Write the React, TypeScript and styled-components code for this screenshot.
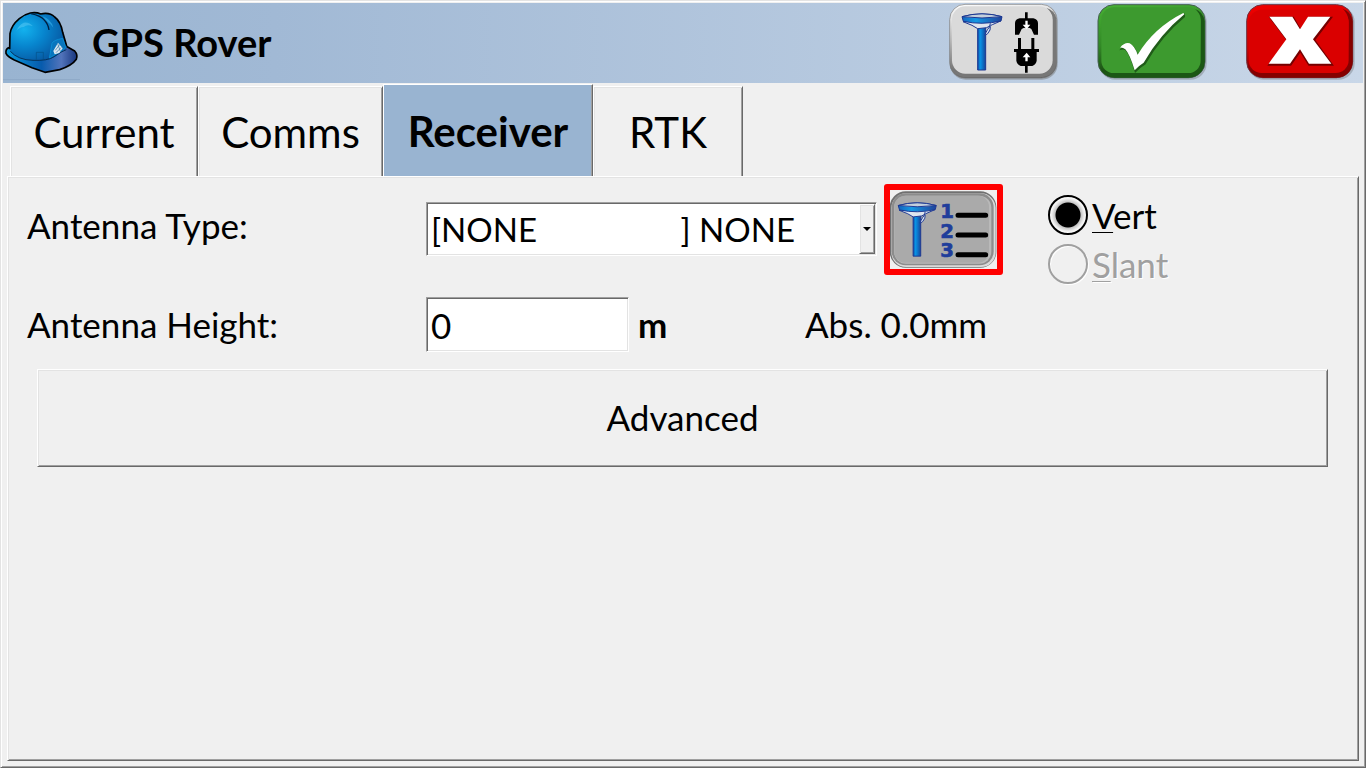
import React, { useState } from "react";
import styled, { createGlobalStyle, css } from "styled-components";

const GlobalStyle = createGlobalStyle`
  * { box-sizing: border-box; }
  body { margin: 0; background: #f0f0f0; }
  body, button, input, select { font-family: Lato, "Open Sans", sans-serif; color: #000; }
`;

const raised = css`
  border: 1px solid;
  border-color: #fff #696969 #696969 #fff;
  box-shadow: inset 1px 1px #e3e3e3, inset -1px -1px #a0a0a0;
`;

const sunken = css`
  border: 1px solid;
  border-color: #a0a0a0 #fff #fff #a0a0a0;
  box-shadow: inset 1px 1px #696969, inset -1px -1px #e3e3e3;
`;

const Window = styled.div`
  display: flex;
  flex-direction: column;
  min-height: 100vh;
  padding: 2px 2px 6px;
  border: 1px solid;
  border-color: #e3e3e3 #696969 #696969 #e3e3e3;
  box-shadow: inset 1px 1px #fff, inset -1px -1px #a0a0a0;
`;

const Header = styled.header`
  display: flex;
  align-items: flex-start;
  height: 80px;
  padding-right: 7px;
  background: linear-gradient(90deg, #99b4d1 0%, #a1b9d5 20%, #c9d7e8 100%);
`;

const Title = styled.h1`
  flex: 1;
  margin: 0 0 0 11px;
  font-size: 38px;
  line-height: 78px;
  font-weight: 700;
`;

const Actions = styled.div`
  display: flex;
  gap: 39px;
`;

const IconButton = styled.button`
  display: block;
  padding: 0;
  border: 0;
  background: none;
  svg { display: block; }
`;

const Helmet = styled.svg`
  margin-top: 6px;
  flex: none;
`;

const Tabs = styled.div`
  display: flex;
  align-items: flex-end;
  height: 93px;
  padding-left: 7px;
`;

const Tab = styled.button<{ $active: boolean; $width: number }>`
  width: ${(p) => p.$width}px;
  height: ${(p) => (p.$active ? 92 : 90)}px;
  padding: 0;
  border: 1px solid;
  border-color: #fff #696969 transparent #fff;
  border-bottom: 0;
  background: ${(p) => (p.$active ? "#99b4d1" : "#f0f0f0")};
  box-shadow: ${(p) => (p.$active ? "inset -1px 0 #a0a0a0" : "inset 1px 1px #e3e3e3, inset -1px 0 #a0a0a0")};
  font-size: 42px;
  line-height: 48px;
  font-weight: ${(p) => (p.$active ? 700 : 400)};
`;

const Panel = styled.main`
  ${raised}
  flex: 1;
  margin: 0 4px 0 4px;
  padding: 7px 30px 24px 19px;
`;

const Row = styled.div<{ $height: number }>`
  display: flex;
  align-items: flex-start;
  min-height: ${(p) => p.$height}px;
  font-size: 35px;
  line-height: 46px;
`;

const Label = styled.label<{ $top: number }>`
  width: 399px;
  flex: none;
  padding-top: ${(p) => p.$top}px;
`;

const SelectBox = styled.div`
  position: relative;
  width: 451px;
  margin: 18px 7px 0 0;
`;

const Select = styled.select`
  ${sunken}
  display: block;
  width: 100%;
  height: 54px;
  padding: 0 20px 0 4px;
  appearance: none;
  border-radius: 0;
  background: #fff;
  font-size: 33px;
`;

const Arrow = styled.span`
  ${raised}
  position: absolute;
  top: 2px;
  right: 2px;
  bottom: 2px;
  display: grid;
  place-items: center;
  width: 16px;
  background: #f0f0f0;
  pointer-events: none;
`;

const ListButton = styled(IconButton)`
  border: 6px solid #f00;
  border-radius: 3px;
  background: #f0f0f0;
`;

const Radios = styled.div`
  display: flex;
  flex-direction: column;
  gap: 9px;
  margin: 11px 0 0 45px;
`;

const RadioLabel = styled.label<{ $off?: boolean }>`
  display: flex;
  align-items: center;
  gap: 4px;
  height: 40px;
  line-height: 40px;
  color: ${(p) => (p.$off ? "#a0a0a0" : "#000")};
  text-shadow: ${(p) => (p.$off ? "1px 1px #fff" : "none")};
  u { text-decoration-thickness: 1px; text-underline-offset: 3px; }
`;

const Radio = styled.input`
  appearance: none;
  width: 40px;
  height: 40px;
  margin: 0;
  border: 2px solid #000;
  border-radius: 50%;
  background: #fff;
  &:checked {
    background: radial-gradient(circle, #000 12px, #c4c4c4 13px, #ececec 16px, #fff 18px);
  }
  &:disabled {
    border-color: #a0a0a0;
    background: #f0f0f0;
    box-shadow: inset 1px 1px #fff, 1px 1px #fff;
  }
`;

const HeightInput = styled.input`
  ${sunken}
  width: 203px;
  height: 55px;
  padding: 0 4px;
  background: #fff;
  font-size: 35px;
`;

const Unit = styled.strong`
  width: 167px;
  margin-left: 9px;
  padding-top: 4px;
`;

const Absolute = styled.output`
  padding-top: 4px;
`;

const Advanced = styled.button`
  ${raised}
  display: block;
  width: calc(100% - 10px);
  height: 98px;
  margin-left: 10px;
  padding: 0 0 2px;
  background: #f0f0f0;
  font-size: 35px;
`;

function Antenna() {
  return (
    <g stroke="#1c3791" strokeWidth="3" strokeLinejoin="round">
      <path d="M113 82h24v128h-24z" fill="url(#pole)" />
      <path d="M69 65L96 76L113 86L140 83L157 74L182 63Z" fill="#dfe5ee" />
      <path d="M66 50Q126 33 186 50L183 63Q126 76 70 64Z" fill="url(#disc)" />
      <path d="M66 50Q126 33 186 50Q126 58 66 50Z" fill="#c3cfdc" />
      <path d="M151 70Q150 83 143 88L137 99L135 106L143 101L150 90L151 79" fill="#dce5f1" strokeWidth="3" />
    </g>
  );
}

function Defs() {
  return (
    <defs>
      <linearGradient id="pole">
        <stop offset="0" stopColor="#14459f" />
        <stop offset=".3" stopColor="#0894e5" />
        <stop offset=".5" stopColor="#0b7fd4" />
        <stop offset="1" stopColor="#164497" />
      </linearGradient>
      <linearGradient id="disc">
        <stop offset="0" stopColor="#1465be" />
        <stop offset=".35" stopColor="#1598e3" />
        <stop offset="1" stopColor="#20439a" />
      </linearGradient>
      <linearGradient id="silver" x2=".15" y2="1">
        <stop offset="0" stopColor="#fff" />
        <stop offset=".5" stopColor="#bababa" />
        <stop offset="1" stopColor="#606060" />
      </linearGradient>
    </defs>
  );
}

function DeviceIcon() {
  return (
    <svg width="110" height="77" viewBox="24 9 330 231" aria-hidden="true">
      <Defs />
      <rect x="30" y="15" width="323" height="224" rx="47" fill="#9aa3ad" />
      <rect x="29" y="13" width="321" height="221" rx="46" fill="url(#silver)" stroke="#777" strokeWidth="2" />
      <path d="M349 55V187Q345 230 302 232H73Q42 228 34 204Q48 220 79 219H293Q335 215 337 178V59Q335 36 319 23Q344 31 349 55Z" fill="#777" />
      <rect x="36" y="19" width="302" height="202" rx="40" fill="#dadada" />
      <Antenna />
      <path d="M255 37h8v18h17q14 3 14 15v34h-12l-8-17q-3-4-14-4t-15 4l-8 17h-12V70q0-12 14-15h16z" fill="#000" />
      <path d="M256 62h7v12h8l-11 14l-12-14h8z" fill="#fff" />
      <path d="M234 114h9v33h31v-33h9v33h14v9h-7v26q-1 10-13 16h-14v20h-8v-20h-13q-12-6-13-16v-26h-7v-9h12z" fill="#000" />
      <path d="M256 184h7v-12h8l-11-14l-12 14h8z" fill="#fff" />
    </svg>
  );
}

function CheckIcon() {
  return (
    <svg width="110" height="77" viewBox="36 9 330 231" aria-hidden="true">
      <defs>
        <linearGradient id="green" x2=".2" y2="1">
          <stop offset="0" stopColor="#47b034" />
          <stop offset=".55" stopColor="#328826" />
          <stop offset="1" stopColor="#153f0f" />
        </linearGradient>
      </defs>
      <rect x="42" y="17" width="323" height="222" rx="49" fill="#a2adba" />
      <rect x="39" y="14" width="321" height="219" rx="48" fill="url(#green)" stroke="#455f50" strokeWidth="3" />
      <path d="M359 64V186Q354 231 309 233H89Q57 230 46 207Q61 220 91 219H302Q343 215 347 178V62Q345 41 329 26Q355 35 359 64Z" fill="#1b5715" />
      <rect x="49" y="22" width="298" height="197" rx="37" fill="#3d9a2f" />
      <path d="M109 147Q123 132 137 135Q151 143 160 170Q211 87 298 44V50Q228 107 180 192Q165 201 151 215Q137 166 124 151Q117 145 109 147Z" fill="#205c19" stroke="#205c19" strokeWidth="4" />
      <path d="M105 143Q119 126 134 130Q149 138 158 164Q207 83 295 39L298 43Q225 103 176 188Q161 197 149 211Q134 162 121 148Q113 142 105 143Z" fill="#fff" />
    </svg>
  );
}

function CancelIcon() {
  return (
    <svg width="110" height="77" viewBox="483 9 330 231" aria-hidden="true">
      <defs>
        <linearGradient id="red" x2=".2" y2="1">
          <stop offset="0" stopColor="#f20000" />
          <stop offset=".6" stopColor="#c90000" />
          <stop offset="1" stopColor="#680000" />
        </linearGradient>
      </defs>
      <rect x="488" y="17" width="321" height="222" rx="49" fill="#a5afbc" />
      <rect x="485" y="14" width="318" height="219" rx="48" fill="url(#red)" stroke="#6e3440" strokeWidth="3" />
      <path d="M803 64V186Q798 231 753 233H535Q503 230 492 207Q507 220 537 219H746Q787 215 791 178V62Q789 41 773 26Q799 35 803 64Z" fill="#850000" />
      <rect x="491" y="29" width="300" height="190" rx="39" fill="#da0000" />
      <path d="M556 53H625L647 91L672 53H739L688 120L742 195H672L646 153L617 195H552L607 120Z" fill="#760000" stroke="#760000" strokeWidth="5" />
      <path d="M553 50H622L645 88L669 50H736L684 118L739 191H672L645 148L615 191H551L604 118Z" fill="#fff" />
    </svg>
  );
}

function AntennaListIcon() {
  return (
    <svg width="107" height="79" viewBox="150 45 321 237" aria-hidden="true">
      <Defs />
      <rect x="149" y="49" width="320" height="229" rx="48" fill="#707070" />
      <rect x="154" y="55" width="313" height="221" rx="44" fill="#dadada" />
      <rect x="155" y="55" width="306" height="216" rx="42" fill="#8c8c8c" />
      <rect x="162" y="62" width="292" height="204" rx="36" fill="#b9b9b9" />
      <rect x="163" y="62" width="284" height="201" rx="33" fill="#aaa" />
      <g transform="translate(112 44) scale(.95)">
        <Antenna />
      </g>
      <g fill="#203d9b" stroke="#203d9b" strokeWidth="2" fontFamily="DejaVu Sans" fontWeight="700" fontSize="59">
        <text x="301" y="130">1</text>
        <text x="301" y="188">2</text>
        <text x="301" y="247">3</text>
      </g>
      <path d="M354 121h83M354 180h83M354 239h83" stroke="#000" strokeWidth="15" strokeLinecap="round" />
    </svg>
  );
}

function HelmetIcon() {
  return (
    <Helmet width="78" height="72" viewBox="9 27 234 216" aria-hidden="true">
      <defs>
        <radialGradient id="dome" cx=".25" cy=".35" r=".8">
          <stop offset="0" stopColor="#13b2ee" />
          <stop offset=".45" stopColor="#0785ce" />
          <stop offset="1" stopColor="#07519b" />
        </radialGradient>
        <linearGradient id="brim">
          <stop offset="0" stopColor="#089cdf" />
          <stop offset=".5" stopColor="#075bad" />
          <stop offset=".78" stopColor="#5274bb" />
          <stop offset="1" stopColor="#17357d" />
        </linearGradient>
      </defs>
      <path d="M9 239H240" stroke="#8ea9c7" strokeWidth="3" />
      <path d="M28 143Q16 146 18 160Q22 169 43 180L96 203L135 217L179 209Q216 197 229 178Q234 164 224 153L199 139Z" fill="url(#brim)" stroke="#000" strokeWidth="5" strokeLinejoin="round" />
      <path d="M29 148L30 101Q33 77 58 56Q73 43 91 39Q109 36 122 42Q149 36 164 51Q182 64 188 97L200 138Q201 146 190 151Q164 175 143 180Q101 184 65 176Q36 168 29 148Z" fill="url(#dome)" />
      <path d="M29 148L30 101Q33 77 58 56Q73 43 91 39Q109 36 122 42Q149 36 164 51Q182 64 188 97L200 138" fill="none" stroke="#000" strokeWidth="5" />
      <path d="M93 41Q121 47 132 59Q145 72 147 90" fill="none" stroke="#001f40" strokeWidth="4" />
      <path d="M49 93Q55 76 71 68Q87 65 99 79Q81 72 71 81Q57 82 49 93Z" fill="#65cff6" opacity=".45" />
      <path d="M127 49Q153 57 160 83Q151 71 144 67Z" fill="#39b3ee" opacity=".6" />
      <path d="M31 154Q54 180 99 181Q143 183 162 170Q184 154 199 149" fill="none" stroke="#04345e" strokeWidth="3" />
      <path d="M109 179V157H130V178" fill="none" stroke="#045086" strokeWidth="2" />
      <path d="M148 174L156 130Q159 121 188 115L198 143L173 160Z" fill="#0875bd" stroke="#0a9ae0" strokeWidth="2" />
      <path d="M174 128L160 153L164 163L178 159L188 145Z" fill="#dce8f2" />
      <path d="M166 151L179 134M168 158L184 142M173 131L181 154" stroke="#286f9f" strokeWidth="2" />
    </Helmet>
  );
}

const TABS = [
  { name: "Current", width: 188 },
  { name: "Comms", width: 185 },
  { name: "Receiver", width: 210 },
  { name: "RTK", width: 150 },
];

const ANTENNA = "[NONE" + "\u00a0".repeat(17) + "] NONE";

export default function App() {
  const [tab, setTab] = useState("Receiver");
  const [height, setHeight] = useState("0");
  return (
    <Window>
      <GlobalStyle />
      <Header>
        <HelmetIcon />
        <Title>GPS Rover</Title>
        <Actions>
          <IconButton aria-label="Connect receiver"><DeviceIcon /></IconButton>
          <IconButton aria-label="Accept"><CheckIcon /></IconButton>
          <IconButton aria-label="Cancel"><CancelIcon /></IconButton>
        </Actions>
      </Header>
      <Tabs role="tablist">
        {TABS.map((t) => (
          <Tab
            key={t.name}
            role="tab"
            aria-selected={t.name === tab}
            $active={t.name === tab}
            $width={t.width}
            onClick={() => setTab(t.name)}
          >
            {t.name}
          </Tab>
        ))}
      </Tabs>
      <Panel>
        <Row $height={113}>
          <Label htmlFor="antenna" $top={18}>Antenna Type:</Label>
          <SelectBox>
            <Select id="antenna">
              <option>{ANTENNA}</option>
            </Select>
            <Arrow>
              <svg width="8" height="4" viewBox="0 0 8 4" aria-hidden="true"><path d="M0 0h8L4 4z" /></svg>
            </Arrow>
          </SelectBox>
          <ListButton aria-label="Antenna list"><AntennaListIcon /></ListButton>
          <Radios>
            <RadioLabel>
              <Radio type="radio" name="measure" defaultChecked />
              <span><u>V</u>ert</span>
            </RadioLabel>
            <RadioLabel $off>
              <Radio type="radio" name="measure" disabled />
              <span><u>S</u>lant</span>
            </RadioLabel>
          </Radios>
        </Row>
        <Row $height={72}>
          <Label htmlFor="height" $top={4}>Antenna Height:</Label>
          <HeightInput id="height" value={height} onChange={(e) => setHeight(e.target.value)} />
          <Unit>m</Unit>
          <Absolute htmlFor="height">Abs. 0.0mm</Absolute>
        </Row>
        <Advanced>Advanced</Advanced>
      </Panel>
    </Window>
  );
}
